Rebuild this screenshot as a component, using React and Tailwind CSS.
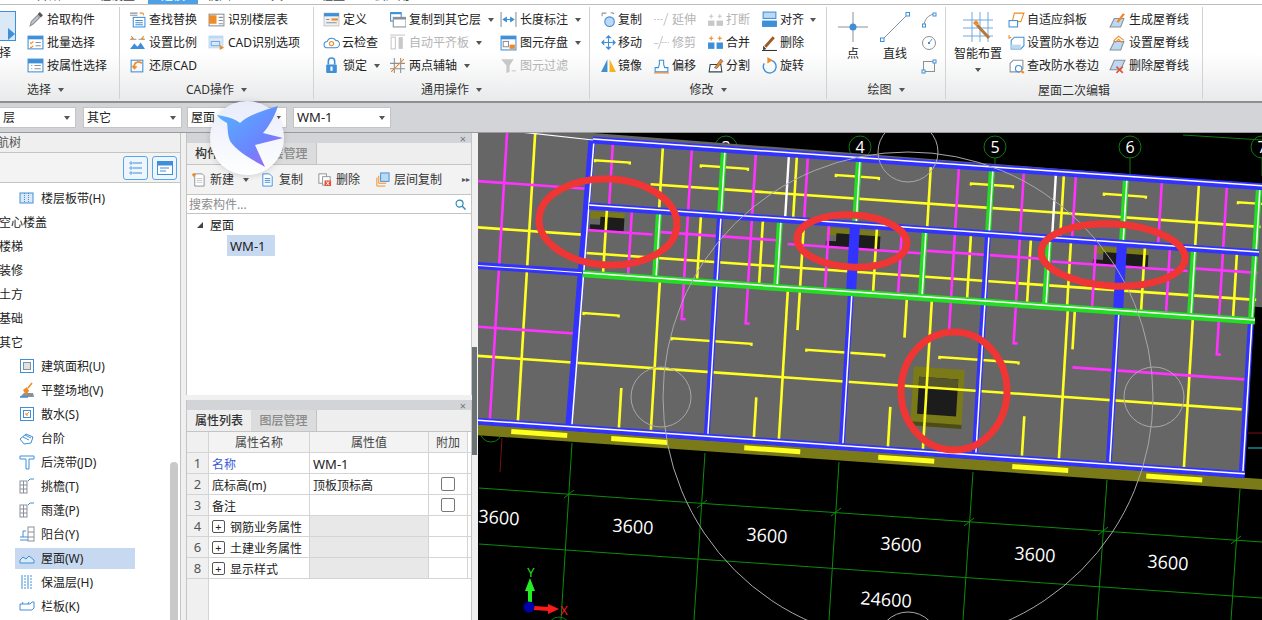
import React from 'react'

const B = '#3f8fd8', O = '#f08a24', G = '#8a9099', L = '#bcd8f2', D = '#c8c8c8'

const paths = {
  pick: <><path d="M3 14l1-4 6-6 2 2-6 6z" fill="#c5c9cf" stroke={G} /><path d="M10 3l2-2 3 3-2 2z" fill="#555" /></>,
  batch: <><rect x="1" y="2" width="14" height="12" fill="#fff" stroke={B} /><rect x="1" y="2" width="14" height="3" fill={B} /><path d="M3 8l1 1 2-2M3 12l1 1 2-2" stroke={O} fill="none" /><path d="M8 8h5M8 11h5" stroke={G} /></>,
  attr: <><rect x="1" y="2" width="14" height="12" fill="#fff" stroke={B} /><rect x="1" y="2" width="14" height="4" fill={B} /><path d="M4 8h1M4 11h1M7 8h6M7 11h6" stroke={G} /></>,
  find: <><path d="M1 2h7M1 4h7" stroke={G} /><path d="M10 2h3l1 2" stroke={O} fill="none" /><rect x="4" y="6" width="11" height="9" fill="#fff" stroke={B} /><path d="M6 9h7M6 11h7M6 13h7" stroke={B} /></>,
  scale: <><path d="M1 14l4-5 3 3 3-4 4 6z" fill={B} /><path d="M1 5h6M9 5h6" stroke={G} /><path d="M2 2l2 2-2 1M14 2l-2 2 2 1" stroke={O} fill="none" /></>,
  restore: <><rect x="2" y="3" width="11" height="11" fill="none" stroke={B} /><path d="M12 6a4 4 0 0 0-7 3" stroke={O} strokeWidth="1.6" fill="none" /><path d="M2 8l3 4 3-3z" fill={O} /></>,
  floor: <><rect x="1" y="3" width="14" height="11" fill="#fff" stroke={G} /><rect x="1" y="4" width="7" height="8" fill={O} /><path d="M10 6h4M10 9h4M10 12h4" stroke={G} /></>,
  cad: <><rect x="1" y="2" width="13" height="11" fill="#dbe9f7" stroke={L} /><rect x="1" y="2" width="13" height="2" fill={L} /><path d="M3 7h8v4H3z" fill="none" stroke={B} strokeWidth=".7" /><path d="M11 10l4 3-4 2z" fill={O} /></>,
  define: <><rect x="1" y="2" width="14" height="12" fill="#f0f0f0" stroke={D} /><rect x="1" y="2" width="14" height="3" fill={B} /><rect x="8" y="7" width="6" height="2" fill={O} /><path d="M3 8h3M3 11h10" stroke={G} /></>,
  cloud: <><path d="M4 13a3 3 0 0 1 0-6 4.500 4.500 0 0 1 8-1 3.500 3.500 0 0 1 0 7z" fill="#fff" stroke={B} /><circle cx="8" cy="9" r="2" fill="none" stroke={O} /></>,
  lock: <><path d="M5 7V4a3 3 0 0 1 6 0v3" fill="none" stroke={B} strokeWidth="1.5" /><rect x="3" y="7" width="10" height="8" rx="1" fill={B} /><rect x="7" y="9" width="2" height="4" fill="#fff" /></>,
  copyTo: <><rect x="1" y="1" width="11" height="9" fill={B} /><rect x="2" y="3" width="9" height="6" fill="#fff" /><rect x="4" y="6" width="12" height="9" fill="#fff" stroke={G} /><rect x="4" y="6" width="12" height="2" fill={G} /></>,
  flush: <><rect x="2" y="3" width="4" height="11" fill="none" stroke={D} /><rect x="9" y="3" width="4" height="11" fill={D} /><path d="M1 1h14" stroke={D} /></>,
  axis: <><path d="M1 6h14M1 11h14M5 1v14M11 1v14" stroke={G} /><path d="M2 14L14 2" stroke={O} /></>,
  len: <><path d="M1 1v14M15 1v14" stroke={G} /><path d="M3 8h10M3 8l3-2v4zM13 8l-3-2v4z" stroke={B} fill={B} /></>,
  save: <><rect x="1" y="2" width="14" height="13" fill="#fff" stroke={B} /><rect x="1" y="2" width="14" height="3" fill={B} /><rect x="3" y="7" width="5" height="5" fill="none" stroke={G} /><rect x="9" y="10" width="5" height="4" fill={O} /></>,
  filter: <><path d="M1 2h12L9 8v6l-3 1V8z" fill={D} /><path d="M11 13h4" stroke={D} /></>,
  copy: <><path d="M2 2h4M2 2v3" stroke={G} /><path d="M10 2a2 2 0 0 1 3 1" stroke={G} fill="none" /><circle cx="9" cy="10" r="4.500" fill={L} stroke={B} /></>,
  move: <><path d="M8 1l3 3H5zM8 15l3-3H5zM1 8l3-3v6zM15 8l-3-3v6z" fill={B} /><path d="M8 4v8M4 8h8" stroke={B} /></>,
  mirror: <><path d="M7 2v12H1z" fill={B} /><path d="M9 2v12h6z" fill="#f5b21b" /></>,
  extend: <><path d="M1 8h8" stroke={D} strokeDasharray="2 1" /><path d="M10 14l4-12" stroke={D} /></>,
  trim: <><path d="M1 9h4" stroke={D} /><path d="M8 8h7" stroke={D} strokeDasharray="2 1" /><path d="M5 14l4-12" stroke={D} /></>,
  offset: <><path d="M2 14v-4h3l1-3V3h4v4l1 3h3v4z" fill="#fff" stroke={B} /><path d="M1 15h14" stroke={O} /></>,
  brk: <><rect x="1" y="9" width="6" height="5" fill={D} /><rect x="9" y="9" width="6" height="5" fill={D} /><path d="M4 3v4M12 3v4M2 5h4M10 5h4" stroke={D} /></>,
  merge: <><rect x="1" y="8" width="6" height="6" fill={B} /><rect x="9" y="8" width="6" height="6" fill={B} /><path d="M4 2v4M12 2v4M2 4h4M10 4h4" stroke={O} /></>,
  split: <><path d="M2 14l1-7h10l1 7z" fill="#fff" stroke="#345" /><path d="M7 10l6-8 2 2-6 7z" fill={O} stroke="#345" strokeWidth=".5" /></>,
  align: <><rect x="2" y="1" width="12" height="6" fill={L} stroke={B} /><rect x="1" y="9" width="14" height="6" fill={B} /></>,
  del: <><path d="M3 11l8-9 2 2-8 9z" fill="#9b5b2a" /><path d="M2 11l3 3-3 1z" fill="#333" /><path d="M1 15.500h14" stroke="#333" /></>,
  rotate: <><path d="M8 3a6 6 0 1 1-5 3" fill="none" stroke={B} strokeWidth="1.300" /><path d="M6 0l5 3-5 3z" fill={O} /></>,
  arc: <><path d="M3 14c0-6 4-11 10-12" fill="none" stroke={G} /><rect x="1.500" y="12" width="3" height="3" fill="#fff" stroke={B} /><rect x="12" y="1" width="3" height="3" fill="#fff" stroke={B} /></>,
  circle: <><circle cx="8" cy="8" r="6.500" fill="none" stroke={G} /><path d="M8 8l3-4" stroke={G} /><rect x="7" y="7" width="2" height="2" fill={B} /></>,
  rect: <><rect x="2.500" y="3.500" width="11" height="10" fill="none" stroke={G} /><rect x="1" y="12" width="3" height="3" fill="#fff" stroke={B} /><rect x="12" y="2" width="3" height="3" fill="#fff" stroke={B} /></>,
  slope: <><path d="M6 2h9l-3 8H4z" fill="#fff" stroke={O} /><rect x="1" y="9" width="8" height="6" fill="#fff" stroke={B} /></>,
  curb: <><path d="M3 6l3-3h9v8l-3 3H3z" fill="#fff" stroke={B} /><path d="M3 10h9v4H3z" fill={L} /><path d="M1 1v3l2-1" stroke={O} fill="none" /></>,
  curb2: <><path d="M2 6l3-3h9v8l-3 3H2z" fill="#fff" stroke={G} /><circle cx="10" cy="11" r="3" fill="#fff" stroke={B} /><path d="M12 13l3 2" stroke={O} strokeWidth="2" /></>,
  ridge: <><path d="M1 15l4-8h9l-3 8z" fill={L} stroke={G} /><path d="M7 10l6-8 2 1-6 8z" fill={O} /></>,
  ridge2: <><path d="M1 15l4-8h9l-3 8z" fill={L} stroke={G} /><path d="M4 7l5-5 5 4M6 8l3-3 3 3" stroke={O} fill="none" /></>,
  ridge3: <><path d="M1 12l4-9h10l-4 9z" fill={L} stroke={G} /><path d="M7 9l6 6M13 9l-6 6" stroke="#e3503c" strokeWidth="1.500" /></>,
  newDoc: <><path d="M4 2h8l2 2v11H4z" fill="#fff" stroke={G} /><path d="M6 7h6M6 9h6M6 11h6" stroke={D} /><path d="M1 3h4M3 1v4" stroke={O} strokeWidth="1.500" /></>,
  copyDoc: <><path d="M3 2h7l3 3v10H3z" fill="#fff" stroke={B} /><path d="M5 7h6M5 9h6M5 11h6" stroke={B} /></>,
  delDoc: <><rect x="2" y="2" width="8" height="10" fill="#fff" stroke={G} /><rect x="6" y="5" width="8" height="9" fill="#fff" stroke={G} /><rect x="8" y="9" width="7" height="6" fill="#e3503c" /><path d="M10 10l3 4M13 10l-3 4" stroke="#fff" /></>,
  layerCopy: <><rect x="6" y="1" width="9" height="9" fill={L} stroke={B} /><path d="M4 4v8h8M2 6v9h9" stroke={O} fill="none" /></>,
  area: <><rect x="1.500" y="1.500" width="13" height="13" fill="#fff" stroke={B} /><rect x="4.500" y="4.500" width="7" height="7" fill="#dde2e8" stroke={G} /></>,
  band: <><rect x="1" y="3" width="13" height="10" fill="#dbe9f7" stroke={B} /><path d="M5.500 3v10M9.500 3v10" stroke={B} strokeDasharray="1 1" /></>,
  site: <><path d="M1 15l4-4h9l1 4z" fill={G} /><path d="M13 1L9 6" stroke={O} strokeWidth="1.500" /><path d="M4 8l4-3 2 4-3 4z" fill={O} /><path d="M1 15h8" stroke={B} strokeWidth="1.500" /></>,
  apron: <><rect x="1.500" y="1.500" width="13" height="13" fill="#fff" stroke={B} /><rect x="4.500" y="4.500" width="7" height="7" fill="#fff" stroke={B} /><path d="M10 6L7 9M7 7v2h2" stroke={O} fill="none" /></>,
  step: <><path d="M1 9l6-5 7 3-2 6-7 1z" fill="#fff" stroke={B} /><path d="M4 7l6 3M6 5l6 3" stroke={B} /></>,
  cast: <><path d="M1 2h14v3H10v10H7V5H1z" fill="#fff" stroke={B} /></>,
  eave: <><rect x="1" y="3" width="7" height="12" fill="#fff" stroke={G} /><path d="M1 7h7M1 11h7M4.500 3v12" stroke={G} /><path d="M9 3l2-2h4" stroke={B} fill="none" /></>,
  balcony: <><rect x="9" y="1" width="6" height="14" fill="#fff" stroke={G} /><path d="M9 6h6M9 11h6" stroke={G} /><path d="M1 11h8M1 14h8M4 11V5h3" stroke={B} fill="none" /></>,
  roof: <><path d="M1 10l3-3 3 2 3-3 5 4v3H1z" fill="#dbe9f7" stroke={B} /></>,
  insul: <><path d="M3 1v14M9 1v14" stroke={B} /><path d="M6 1v14M12 1v14" stroke={B} strokeDasharray="2 1" /></>,
  panel: <><path d="M1 6h10l2-2h2v6l-2 2H1z" fill="#fff" stroke={B} /><path d="M3 6l1-2M9 6l1-2" stroke={B} /></>,
}

function Icon({ name, className = 'w-4 h-4' }) {
  return <svg viewBox="0 0 16 16" className={`${className} shrink-0`}>{paths[name]}</svg>
}

function Caret({ className = '' }) {
  return <span className={`inline-block w-0 h-0 border-x-[3.5px] border-t-[4px] border-x-transparent border-t-[#555] ${className}`} />
}

function Item({ icon, text, caret, off, gap = 'gap-[3px]' }) {
  return (
    <div className={`flex items-center h-[23px] ${gap} whitespace-nowrap ${off ? 'text-[#b4b4b4]' : 'text-[#222]'}`}>
      <Icon name={icon} className="w-[17px] h-[17px]" />
      <span>{text}</span>
      {caret && <Caret className="ml-[4px]" />}
    </div>
  )
}

function Group({ w, label, labelCls = 'pt-[3px]', children }) {
  return (
    <div className={`flex flex-col shrink-0 my-[2px] border-r border-[#d2d2d2] ${w}`}>
      <div className="flex h-[71px] pt-px">{children}</div>
      <div className={`flex flex-1 items-center justify-center gap-[7px] text-[#333] ${labelCls}`}>
        <span>{label}</span>
        {label !== '屋面二次编辑' && <Caret />}
      </div>
    </div>
  )
}

function Ribbon() {
  return (
    <div className="flex h-[98px] bg-gradient-to-b from-white from-50% to-[#e9eaeb] border-b-2 border-[#8f8f8f] text-xs">
      <Group w="w-[120px]" label="选择" labelCls="pr-[28px] pt-[3px]">
        <div className="w-[27px] flex flex-col">
          <div className="w-[16px] h-[30px] mt-[3px] bg-[#dbe9f7] border border-l-0 border-[#3f8fd8] flex items-end justify-end">
            <span className="w-0 h-0 border-y-[6px] border-l-[7px] border-y-transparent border-l-[#3f8fd8]" />
          </div>
          <span className="mt-[4px] text-[#222] -ml-[1px]">择</span>
        </div>
        <div className="flex flex-col">
          <Item icon="pick" text="拾取构件" />
          <Item icon="batch" text="批量选择" />
          <Item icon="attr" text="按属性选择" />
        </div>
      </Group>
      <Group w="w-[194px]" label="CAD操作">
        <div className="flex flex-col w-[79px] ml-[9px]">
          <Item icon="find" text="查找替换" />
          <Item icon="scale" text="设置比例" />
          <Item icon="restore" text="还原CAD" />
        </div>
        <div className="flex flex-col">
          <Item icon="floor" text="识别楼层表" />
          <Item icon="cad" text="CAD识别选项" />
        </div>
      </Group>
      <Group w="w-[276px]" label="通用操作">
        <div className="flex flex-col w-[66px] ml-[9px]">
          <Item icon="define" text="定义" />
          <Item icon="cloud" text="云检查" gap="gap-[2px]" />
          <Item icon="lock" text="锁定" caret />
        </div>
        <div className="flex flex-col w-[111px]">
          <Item icon="copyTo" text="复制到其它层" caret />
          <Item icon="flush" text="自动平齐板" caret off />
          <Item icon="axis" text="两点辅轴" caret />
        </div>
        <div className="flex flex-col">
          <Item icon="len" text="长度标注" caret />
          <Item icon="save" text="图元存盘" caret />
          <Item icon="filter" text="图元过滤" off />
        </div>
      </Group>
      <Group w="w-[237px]" label="修改">
        <div className="flex flex-col w-[53px] ml-[10px]">
          <Item icon="copy" text="复制" gap="gap-px" />
          <Item icon="move" text="移动" gap="gap-px" />
          <Item icon="mirror" text="镜像" gap="gap-px" />
        </div>
        <div className="flex flex-col w-[54px]">
          <Item icon="extend" text="延伸" off gap="gap-[2px]" />
          <Item icon="trim" text="修剪" off gap="gap-[2px]" />
          <Item icon="offset" text="偏移" gap="gap-[2px]" />
        </div>
        <div className="flex flex-col w-[54px]">
          <Item icon="brk" text="打断" off gap="gap-[2px]" />
          <Item icon="merge" text="合并" gap="gap-[2px]" />
          <Item icon="split" text="分割" gap="gap-[2px]" />
        </div>
        <div className="flex flex-col">
          <Item icon="align" text="对齐" caret gap="gap-[2px]" />
          <Item icon="del" text="删除" gap="gap-[2px]" />
          <Item icon="rotate" text="旋转" gap="gap-[2px]" />
        </div>
      </Group>
      <Group w="w-[119px]" label="绘图">
        <div className="flex flex-col items-center w-[44px] ml-[4px] text-[#222]">
          <svg viewBox="0 0 30 30" className="w-[30px] h-[30px] mt-[4px]">
            <path d="M15 0v30M0 15h30" stroke="#8a9099" />
            <circle cx="15" cy="15" r="3.500" fill="#3f8fd8" />
          </svg>
          <span className="mt-[4px]">点</span>
        </div>
        <div className="flex flex-col items-center w-[40px] text-[#222]">
          <svg viewBox="0 0 30 30" className="w-[30px] h-[30px] mt-[4px]">
            <path d="M2 28L28 2" stroke="#8a9099" />
            <rect x="0.500" y="26" width="3.500" height="3.500" fill="#fff" stroke="#3f8fd8" />
            <rect x="26" y="0.500" width="3.500" height="3.500" fill="#fff" stroke="#3f8fd8" />
          </svg>
          <span className="mt-[4px]">直线</span>
        </div>
        <div className="flex flex-col ml-[6px]">
          <div className="h-[23px] flex items-center"><Icon name="arc" /></div>
          <div className="h-[23px] flex items-center"><Icon name="circle" /></div>
          <div className="h-[23px] flex items-center"><Icon name="rect" /></div>
        </div>
      </Group>
      <Group w="w-[257px]" label="屋面二次编辑" labelCls="pt-[6px]">
        <div className="flex flex-col items-center w-[56px] ml-[4px] text-[#222]">
          <svg viewBox="0 0 30 30" className="w-[30px] h-[30px] mt-[4px]">
            <path d="M0 8h30M0 16h30M0 24h30M9 0v30M17 0v30M25 0v30" stroke="#6fa9e0" />
            <path d="M14 13l12 13" stroke="#b8763a" strokeWidth="3" />
            <path d="M10 11l3-3 3 3-3 3z" fill="#f08a24" />
          </svg>
          <span className="mt-[4px] whitespace-nowrap">智能布置</span>
          <Caret className="mt-[6px]" />
        </div>
        <div className="flex flex-col w-[101px] ml-[2px]">
          <Item icon="slope" text="自适应斜板" gap="gap-[2px]" />
          <Item icon="curb" text="设置防水卷边" gap="gap-[2px]" />
          <Item icon="curb2" text="查改防水卷边" gap="gap-[2px]" />
        </div>
        <div className="flex flex-col">
          <Item icon="ridge" text="生成屋脊线" />
          <Item icon="ridge2" text="设置屋脊线" />
          <Item icon="ridge3" text="删除屋脊线" />
        </div>
      </Group>
    </div>
  )
}

function Combo({ text, w, cls = '' }) {
  return (
    <div className={`flex items-center justify-between h-[21px] px-[3px] bg-white border border-[#c4c4c4] text-[#222] ${w}`}>
      <span className={cls}>{text}</span>
      <Caret className="mr-[2px]" />
    </div>
  )
}

const treeItems = [
  ['band', '楼层板带(H)'], [null, '空心楼盖'], [null, '楼梯'], [null, '装修'], [null, '土方'], [null, '基础'], [null, '其它'],
  ['area', '建筑面积(U)'], ['site', '平整场地(V)'], ['apron', '散水(S)'], ['step', '台阶'], ['cast', '后浇带(JD)'],
  ['eave', '挑檐(T)'], ['eave', '雨蓬(P)'], ['balcony', '阳台(Y)'], ['roof', '屋面(W)', true], ['insul', '保温层(H)'], ['panel', '栏板(K)'],
]

function LeftPanel() {
  return (
    <div className="w-[181px] shrink-0 flex flex-col bg-white border-r border-[#c4c4c4] text-xs text-[#222]">
      <div className="h-[20px] flex items-center bg-[#efefef] border-b border-[#c4c4c4] text-[#555] -indent-[3px]">航树</div>
      <div className="h-[30px] flex items-center justify-end gap-[4px] pr-[3px] bg-[#f3f3f3] border-b border-[#c4c4c4]">
        <div className="w-[25px] h-[24px] flex items-center justify-center rounded-[3px] border border-[#5aa5e8] bg-[#eef5fc]">
          <svg viewBox="0 0 14 14" className="w-[14px] h-[14px]"><path d="M4 2h9M4 7h9M4 12h9" stroke="#3f8fd8" /><path d="M1 1h2v2H1zM1 6h2v2H1zM1 11h2v2H1z" fill="none" stroke="#3f8fd8" strokeWidth=".7" /></svg>
        </div>
        <div className="w-[25px] h-[24px] flex items-center justify-center rounded-[3px] border border-[#5aa5e8] bg-[#eef5fc]">
          <svg viewBox="0 0 16 14" className="w-[16px] h-[14px]"><rect x="0.500" y="0.500" width="15" height="13" fill="#fff" stroke="#3f8fd8" /><rect x="0.500" y="0.500" width="15" height="4" fill="#3f8fd8" /><path d="M3 7h9M3 10h6" stroke="#3f8fd8" /></svg>
        </div>
      </div>
      <div className="flex flex-1 min-h-0">
        <div className="flex-1 pt-[3px] overflow-hidden">
          {treeItems.map(([icon, text, active]) => (
            <div key={text} className="flex items-center h-[24px] whitespace-nowrap">
              {icon ? (
                <div className={`flex items-center h-[21px] w-[120px] ml-[15px] pl-[4px] gap-[6px] ${active ? 'bg-[#c7d9f0]' : ''}`}>
                  <Icon name={icon} className="w-[16px] h-[16px]" />
                  <span className="pt-[2px]">{text}</span>
                </div>
              ) : (
                <span className="-ml-[1px] pt-[2px]">{text}</span>
              )}
            </div>
          ))}
        </div>
        <div className="w-[8px] h-[158px] mt-auto mr-[2px] rounded-t-[4px] bg-[#c9c9c9]" />
      </div>
    </div>
  )
}

function PanelHead({ tabs }) {
  return (
    <>
      <div className="h-[10px] flex items-center justify-end pr-[5px] bg-[#d2d4d8] text-[#777] text-[11px] leading-none">×</div>
      <div className="h-[22px] flex bg-[#eeeeee] border-b border-[#c4c4c4]">
        {tabs.map((t, i) => (
          <div key={t} className={`flex items-center justify-center h-full pt-px font-medium ${i === 0 ? 'w-[64px] text-[#333]' : 'w-[66px] bg-[#dcdcdc] text-[#8a8a8a] border-r border-[#c4c4c4]'}`}>{t}</div>
        ))}
      </div>
    </>
  )
}

function Tool({ icon, text, caret, w }) {
  return (
    <div className={`flex items-center gap-[4px] whitespace-nowrap ${w}`}>
      <Icon name={icon} className="w-[15px] h-[15px]" />
      <span className="pt-px">{text}</span>
      {caret && <Caret className="ml-[5px]" />}
    </div>
  )
}

function UpperPanel() {
  return (
    <div className="h-[262px] flex flex-col border-x border-[#c4c4c4]">
      <PanelHead tabs={['构件列表', '图层管理']} />
      <div className="h-[30px] flex items-center pl-[4px] bg-[#f3f3f3] border-b border-[#c4c4c4] text-[#333]">
        <Tool icon="newDoc" text="新建" caret w="w-[69px]" />
        <Tool icon="copyDoc" text="复制" w="w-[57px]" />
        <Tool icon="delDoc" text="删除" w="w-[58px]" />
        <Tool icon="layerCopy" text="层间复制" w="w-[87px]" />
        <span className="text-[8px] text-[#555]">▸▸</span>
      </div>
      <div className="h-[19px] flex items-center justify-between pl-[2px] pr-[5px] bg-white border-b border-[#c4c4c4] text-[#8c8c8c]">
        <span className="pt-[2px]">搜索构件...</span>
        <svg viewBox="0 0 12 12" className="w-[11px] h-[11px]"><circle cx="5" cy="5" r="3.800" fill="none" stroke="#2a88b8" strokeWidth="1.300" /><path d="M8 8l3.500 3.500" stroke="#2a88b8" strokeWidth="1.500" /></svg>
      </div>
      <div className="flex-1 bg-white text-[#222]">
        <div className="flex items-center h-[21px] pl-[10px] gap-[7px]">
          <span className="w-0 h-0 border-l-[6px] border-b-[6px] border-l-transparent border-b-[#444]" />
          <span className="pt-[3px]">屋面</span>
        </div>
        <div className="w-[48px] h-[21px] ml-[40px] pl-[3px] pt-[2px] flex items-center bg-[#c7d9f0] text-[13px]">WM-1</div>
      </div>
    </div>
  )
}

function Cell({ w, cls = '', children }) {
  return <div className={`flex items-center h-full border-r border-[#d4d4d4] shrink-0 ${w} ${cls}`}>{children}</div>
}

function Check() {
  return <span className="w-[14px] h-[14px] rounded-[2px] border border-[#777] bg-white" />
}

const rows = [
  ['1', '名称', 'WM-1', false, false],
  ['2', '底标高(m)', '顶板顶标高', true, false],
  ['3', '备注', '', true, false],
  ['4', '钢筋业务属性', '', false, true],
  ['6', '土建业务属性', '', false, true],
  ['8', '显示样式', '', false, true],
]

function LowerPanel() {
  return (
    <div className="h-[220px] mt-[5px] flex flex-col border-x border-[#c4c4c4] bg-white">
      <PanelHead tabs={['属性列表', '图层管理']} />
      <div className="flex h-[21px] border-b border-[#d4d4d4] text-[#444] text-center">
        <Cell w="w-[22px]" cls="bg-[#f0f0f0]" />
        <Cell w="w-[101px]" cls="justify-center bg-[#f3f3f3] pt-px">属性名称</Cell>
        <Cell w="w-[119px]" cls="justify-center bg-[#f3f3f3] pt-px">属性值</Cell>
        <Cell w="w-[39px]" cls="justify-center bg-[#f3f3f3] pt-px">附加</Cell>
      </div>
      {rows.map(([n, name, val, check, group]) => (
        <div key={n} className="flex h-[21px] border-b border-[#d4d4d4] text-[#222]">
          <Cell w="w-[22px]" cls="justify-center bg-[#f0f0f0] text-[#555] text-[13px] pt-[2px]">{n}</Cell>
          <Cell w="w-[101px]" cls={`pl-[3px] gap-[5px] ${n === '1' ? 'text-[#3a5ad8]' : ''}`}>
            {group && <span className="w-[13px] h-[13px] flex items-center justify-center rounded-[2px] border border-[#555] text-[11px] leading-none">+</span>}
            <span className="whitespace-nowrap pt-[3px]">{name}</span>
          </Cell>
          <Cell w="w-[119px]" cls={`pl-[3px] ${group ? 'bg-[#e8e8e8]' : ''}`}>
            <span className={`pt-[3px] ${val === 'WM-1' ? 'text-[13px]' : ''}`}>{val}</span>
          </Cell>
          <Cell w="w-[39px]" cls="justify-center">{check && <Check />}</Cell>
        </div>
      ))}
      <div className="flex-1 w-[22px] bg-[#f0f0f0] border-r border-[#d4d4d4]" />
    </div>
  )
}

const yellowV = [
  [70, 0, 66], [204, 0, 66], [338, 0, 66], [471, 0, 66], [606, 0, 66],
  [18, 66, 134], [112, 66, 134], [174, 66, 134], [215, 66, 175], [288, 66, 134], [382, 66, 134], [442, 66, 134], [482, 66, 134], [556, 66, 134], [648, 66, 134],
  [75, 134, 288], [203, 134, 288], [322, 134, 175], [347, 134, 288], [483, 134, 288], [490, 134, 175], [608, 134, 288],
  [43, 245, 288], [178, 245, 288], [312, 245, 288], [446, 245, 288], [-58, -8, 288],
]
const magentaV = [
  [20, 0, 66], [99, 0, 172], [163, 0, 172], [215, 0, 66], [366, 0, 165], [431, 0, 173], [483, 0, 66], [569, 0, 66], [634, 0, 170],
  [43, 66, 134], [240, 66, 134], [313, 66, 134], [507, 66, 134], [581, 66, 134], [-86, -8, 288],
]
const yellowShort = [[3, 38, 20], [109, 156, 18], [244, 287, 18], [379, 421, 17], [512, 554, 18], [646, 680, 17], [1, 36, 173], [90, 170, 192], [225, 303, 194], [358, 437, 192]]
const yellowH = [[-120, -2, 95], [60, 670, 40], [0, 670, 113], [-120, 662, 223]]
const magentaH = [[-120, 0, 49], [0, 65, 90], [70, 193, 87], [200, 336, 90], [337, 460, 87], [464, 600, 89], [605, 670, 86], [-120, -3, 194], [491, 666, 193]]
const greenV = [[131, 0, 66], [266, 0, 66], [399, 0, 66], [533, 0, 66], [666, 0, 134], [70, 66, 134], [191, 66, 134], [336, 66, 134], [460, 66, 134], [605, 66, 134]]
const blueV = [[131, 66, 288], [399, 66, 288], [266, 134, 288], [533, 134, 288], [666, 134, 288]]
const holes = [[2, 36], [238, 292], [505, 560]]
const bubbles = [[726, '3'], [860, '4'], [995, '5'], [1130, '6'], [1262, '7']]
const dims = [[499, 518], [633, 527], [767, 536], [901, 545], [1035, 555], [1168, 563]]
const gridV = [[572, 443, 561, 620], [705, 453, 694, 620], [839, 462, 829, 620], [973, 472, 963, 620], [1107, 480, 1097, 620], [1240, 489, 1231, 620]]
const ticks = [[569, 494], [702, 504], [836, 512], [969, 522], [1103, 531], [1236, 540]]

function Wall({ u, v1, v2, color }) {
  return (
    <g>
      <path d={`M${u} ${v1}V${v2}`} stroke={color} strokeWidth="6" />
      <path d={`M${u + 1} ${v1}V${v2}`} stroke="#fff" strokeWidth="1.500" />
    </g>
  )
}

function HWall({ u1, u2, v, color }) {
  return (
    <g>
      <path d={`M${u1} ${v}H${u2}`} stroke={color} strokeWidth="7" />
      <path d={`M${u1} ${v - 1}H${u2}`} stroke="#fff" strokeWidth="1.500" />
    </g>
  )
}

function Canvas() {
  return (
    <svg viewBox="478 133 784 487" className="block w-full h-full bg-black" fontFamily="'Open Sans', sans-serif">
      {bubbles.map(([x, t]) => (
        <g key={t}>
          <circle cx={x} cy="147" r="11" fill="none" stroke="#0b7a0b" />
          <path d={`M${x} 158V176`} stroke="#0b7a0b" />
          <text x={x} y="153" fontSize="16" fill="#fff" textAnchor="middle">{t}</text>
        </g>
      ))}
      <path d="M1183 135L1262 140" stroke="#0b7a0b" />

      {gridV.map(([a, b, c, d]) => <path key={a} d={`M${a} ${b}L${c} ${d}`} stroke="#0c8c0c" />)}
      <path d="M479 488L1262 542M479 544L1262 598" stroke="#0c8c0c" />
      {ticks.map(([x, y]) => <path key={x} d={`M${x - 5} ${y + 4}L${x + 5} ${y - 4}`} stroke="#0c8c0c" />)}
      <path d="M502 438L500 472" stroke="#7a1010" />
      <circle cx="491" cy="431" r="11" fill="none" stroke="#0b7a0b" />
      <circle cx="559" cy="628" r="11" fill="none" stroke="#0b7a0b" />
      <circle cx="693" cy="637" r="11" fill="none" stroke="#0b7a0b" />
      <path d="M1248 433H1262" stroke="#7a1010" />
      <path d="M1248 448H1262" stroke="#22cccc" />

      {dims.map(([x, y]) => (
        <text key={x} x={x} y={y + 6} fontSize="18" fill="#fff" textAnchor="middle" transform={`rotate(4 ${x} ${y})`}>3600</text>
      ))}
      <text x="886" y="606" fontSize="18" fill="#fff" textAnchor="middle" transform="rotate(4 886 600)">24600</text>

      <g transform="matrix(1 0.07 -0.06 1 593 140)" fill="none">
        <path d="M-140 -8L700 -2V120H666V288H-140z" fill="#666666" />
        <path d="M-100 291H705V302H-100z" fill="#7a7a18" />
        {[-64, 36, 169, 303, 437, 571].map(u => <path key={u} d={`M${u} 296H${u + 56}`} stroke="#ffff22" strokeWidth="5" />)}

        {holes.map(([a, b]) => (
          <g key={a}>
            <path d={`M${a} 71H${b}V78H${a}z`} fill="#7a7a18" />
            <path d={`M${a} 84H${a + 10}V76H${b}V90H${a}z`} fill="#1c1c1c" />
          </g>
        ))}
        <path d="M333 203H384V258H333z" fill="#7a7a18" />
        <path d="M384 258H333V262H384z" fill="#4d4d12" />
        <path d="M339 213H378V250H339z" fill="#1c1c1c" />
        <path d="M339 213H378V222H339z" fill="#55552a" />

        {yellowH.map(([a, b, v]) => <path key={`${a}${v}`} d={`M${a} ${v}H${b}`} stroke="#ffff22" strokeWidth="2.600" />)}
        {yellowV.map(([u, a, b]) => <path key={`${u}${a}`} d={`M${u} ${a}V${b}`} stroke="#ffff22" strokeWidth="2.600" />)}
        {magentaH.map(([a, b, v]) => <path key={`${a}${v}`} d={`M${a} ${v}H${b}`} stroke="#ff33ff" strokeWidth="2.600" />)}
        {magentaV.map(([u, a, b]) => <path key={`${u}${a}`} d={`M${u} ${a}V${b}${b > 160 && b < 180 ? 'h4' : ''}`} stroke="#ff33ff" strokeWidth="2.600" />)}
        {yellowShort.map(([a, b, v]) => <path key={`${a}${v}`} d={`M${a} ${v + 2}V${v}H${b}V${v + 2}`} stroke="#ffff22" strokeWidth="2.400" />)}

        {greenV.map(([u, a, b]) => <Wall key={`${u}${a}`} u={u} v1={a} v2={b} color="#22dd22" />)}
        <path d="M196 0V66M463 0V66" stroke="#fff" strokeWidth="2.400" />
        {blueV.map(([u, a, b]) => <Wall key={`${u}${a}`} u={u} v1={a} v2={b} color="#3333ff" />)}
        <path d="M266 66V134M533 66V134" stroke="#3333ff" strokeWidth="10" />
        <path d="M-1 0L-7 288" stroke="#3333ff" strokeWidth="7" />
        <path d="M1 0L-4 288" stroke="#fff" strokeWidth="1.500" />

        <path d="M-125 -5L0 0" stroke="#fff" strokeWidth="1.200" />
        <HWall u1={0} u2={700} v={0} color="#3333ff" />
        <HWall u1={0} u2={670} v={66} color="#3333ff" />
        <HWall u1={-2} u2={670} v={134} color="#22dd22" />
        <path d="M-120 133H-3" stroke="#3333ff" strokeWidth="7" />
        <path d="M-120 133H-3" stroke="#fff" strokeWidth="1" />
        <HWall u1={-120} u2={669} v={288} color="#3333ff" />
      </g>

      <g fill="none" stroke="#a8a8a8">
        <circle cx="908" cy="397" r="245" />
        <circle cx="908" cy="152" r="30" />
        <circle cx="661" cy="397" r="30" />
        <circle cx="1154" cy="397" r="30" />
        <circle cx="908" cy="642" r="30" />
      </g>

      <g fill="none" stroke="#f03535" strokeWidth="7">
        <ellipse cx="608" cy="222" rx="69" ry="43" transform="rotate(3 608 222)" />
        <ellipse cx="852" cy="241" rx="55" ry="26" transform="rotate(3 852 241)" />
        <ellipse cx="1113" cy="255" rx="72" ry="31" transform="rotate(3 1113 255)" />
        <ellipse cx="954" cy="391" rx="53" ry="59" />
      </g>

      <path d="M530 602V590" stroke="#22ee22" strokeWidth="4" />
      <path d="M530 578L535 591H525z" fill="#22ee22" />
      <text x="531" y="577" fontSize="13" fill="#22ee22" textAnchor="middle">Y</text>
      <path d="M534 608L549 609" stroke="#ff1a1a" strokeWidth="4" />
      <path d="M559 609L548 604V614z" fill="#ff1a1a" />
      <text x="564" y="615" fontSize="13" fill="#ff1a1a" textAnchor="middle">X</text>
      <circle cx="529" cy="607" r="5.500" fill="#0000aa" />
    </svg>
  )
}

export default function App() {
  return (
    <div className="relative h-[620px] w-[1262px] overflow-hidden bg-[#f0f0f0] text-xs font-['Noto_Sans','Noto_Sans_CJK_SC',sans-serif]">
      <div className="flex h-[5px] overflow-hidden bg-white border-b border-[#bdbdbd] text-[#444] leading-[12px]">
        <span className="ml-[37px] -mt-[10px]">开始</span>
        <span className="ml-[26px] -mt-[10px]">工程设置</span>
        <span className="ml-[13px] w-[50px] -mt-[10px] pb-[2px] text-center bg-[#4ea1e6] text-white">建模</span>
        <span className="ml-[9px] -mt-[10px]">视图</span>
        <span className="ml-[28px] -mt-[10px]">工具</span>
        <span className="ml-[26px] -mt-[10px]">工程量</span>
        <span className="ml-[29px] -mt-[10px]">云应用</span>
      </div>
      <Ribbon />
      <div className="flex items-center h-[30px] bg-[#d3d4d8] border-b border-[#9a9a9a]">
        <Combo text="层" w="w-[76px] border-l-0" />
        <div className="ml-[7px]"><Combo text="其它" w="w-[99px]" /></div>
        <div className="ml-[5px]"><Combo text="屋面" w="w-[100px]" /></div>
        <div className="ml-[6px]"><Combo text="WM-1" w="w-[98px]" cls="text-[13px]" /></div>
      </div>
      <div className="flex h-[487px]">
        <LeftPanel />
        <div className="w-[286px] ml-[5px] shrink-0 flex flex-col">
          <UpperPanel />
          <LowerPanel />
        </div>
        <div className="w-[6px] shrink-0 flex flex-col pt-[214px]">
          <div className="w-[5px] h-[108px] bg-[#6b7276]" />
        </div>
        <div className="flex-1 min-w-0"><Canvas /></div>
      </div>

      {/* floating app badge above the panels */}
      <div className="absolute left-[210px] top-[101px] w-[74px] h-[74px] rounded-full bg-gradient-to-b from-[#e8ecfa] to-white shadow-[0_1px_6px_rgba(0,0,0,0.15)]">
        <svg viewBox="0 0 74 74" className="w-full h-full">
          <defs>
            <linearGradient id="bird" x1="0" y1="0" x2="1" y2="1">
              <stop offset="0" stopColor="#55b6ff" />
              <stop offset="0.6" stopColor="#6a86ff" />
              <stop offset="1" stopColor="#b45cf0" />
            </linearGradient>
          </defs>
          <path d="M7 14C14 15 24 17 30 22C38 14 55 9 68 5C65 14 60 24 53 32L73 37L45 44L55 66C45 60 28 52 20 40C17 32 18 26 17 22C13 20 9 17 7 14Z" fill="url(#bird)" />
        </svg>
      </div>
    </div>
  )
}
